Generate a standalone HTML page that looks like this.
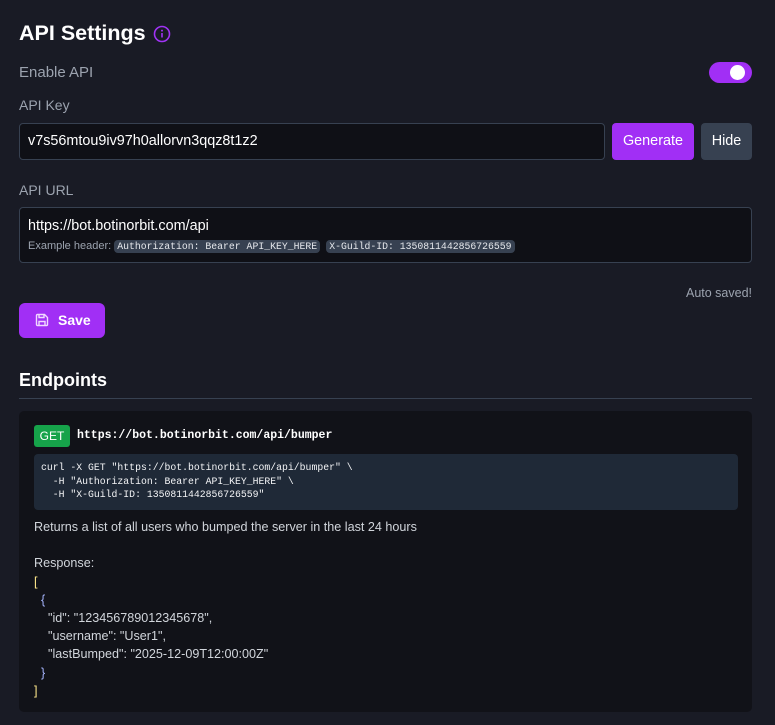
<!DOCTYPE html>
<html><head><meta charset="utf-8"><style>
*{box-sizing:border-box;margin:0;padding:0}
body{width:775px;height:725px;background:#191b25;font-family:"Liberation Sans",sans-serif;color:#fff;position:relative;overflow:hidden}
.a{position:absolute}
.mono{font-family:"Liberation Mono","DejaVu Sans Mono",monospace}
.lbl{color:#9ca3af;font-size:14px}
.chip{background:#374151;border-radius:4px;padding:1px 3px;color:#e5e7eb;font-size:9.8px}
</style></head><body>
<div class="a" style="left:19px;top:21px;font-size:21.5px;font-weight:bold">API Settings</div>
<svg class="a" style="left:153px;top:25px" width="18" height="18" viewBox="0 0 18 18"><circle cx="9" cy="9" r="7.5" fill="none" stroke="#a033f5" stroke-width="1.6"/><line x1="9" y1="8" x2="9" y2="12.5" stroke="#a033f5" stroke-width="1.6"/><circle cx="9" cy="5.6" r="1" fill="#a033f5"/></svg>
<div class="a lbl" style="left:19px;top:64px;font-size:15px">Enable API</div>
<div class="a" style="left:709px;top:62px;width:43px;height:21px;border-radius:11px;background:#a12ff5"></div>
<div class="a" style="left:730px;top:65px;width:15px;height:15px;border-radius:50%;background:#fff"></div>
<div class="a lbl" style="left:19px;top:97px">API Key</div>
<div class="a" style="left:19px;top:123px;width:586px;height:37px;background:#0f1016;border:1px solid #374151;border-radius:4px;padding:0 8px;line-height:35px;font-size:14.4px">v7s56mtou9iv97h0allorvn3qqz8t1z2</div>
<div class="a" style="left:612px;top:123px;width:82px;height:37px;background:#a12ff5;border-radius:4px;text-align:center;line-height:37px;font-size:14.4px">Generate</div>
<div class="a" style="left:701px;top:123px;width:51px;height:37px;background:#374151;border-radius:4px;text-align:center;line-height:37px;font-size:14.4px">Hide</div>
<div class="a lbl" style="left:19px;top:182px">API URL</div>
<div class="a" style="left:19px;top:207px;width:733px;height:56px;background:#0f1016;border:1px solid #374151;border-radius:4px"></div>
<div class="a" style="left:28px;top:218px;font-size:14.4px">https://bot.botinorbit.com/api</div>
<div class="a" style="left:28px;top:240px;font-size:11px;color:#9ca3af;white-space:nowrap">Example header: <span class="mono chip">Authorization: Bearer API_KEY_HERE</span>&nbsp; <span class="mono chip">X-Guild-ID: 1350811442856726559</span></div>
<div class="a" style="right:23px;top:286px;font-size:12.5px;color:#9ca3af">Auto saved!</div>
<div class="a" style="left:19px;top:303px;width:86px;height:35px;background:#a12ff5;border-radius:6px;font-size:14px;font-weight:bold;line-height:35px;padding-left:39px">Save</div>
<svg class="a" style="left:34px;top:312px" width="16" height="16" viewBox="0 0 16 16" fill="none" stroke="#f0d8ff" stroke-width="1.4"><path d="M2.5 3.5a1 1 0 0 1 1-1h7l3 3v7a1 1 0 0 1-1 1h-9a1 1 0 0 1-1-1z"/><path d="M5 2.5v3h5v-3M5 13.5v-4h6v4"/></svg>
<div class="a" style="left:19px;top:370px;font-size:18px;font-weight:bold">Endpoints</div>
<div class="a" style="left:19px;top:398px;width:733px;height:1px;background:#374151"></div>
<div class="a" style="left:19px;top:411px;width:733px;height:301px;background:#111218;border-radius:5px"></div>
<div class="a" style="left:34px;top:425px;width:36px;height:22px;background:#16a34a;border-radius:3px;font-size:12px;text-align:center;line-height:22px">GET</div>
<div class="a mono" style="left:77px;top:429px;font-size:11.5px;font-weight:bold">https://bot.botinorbit.com/api/bumper</div>
<div class="a" style="left:34px;top:454px;width:704px;height:56px;background:#1f2937;border-radius:4px"></div>
<pre class="a mono" style="left:41px;top:461px;font-size:9.8px;line-height:13.5px;color:#f3f4f6">curl -X GET "https://bot.botinorbit.com/api/bumper" \
  -H "Authorization: Bearer API_KEY_HERE" \
  -H "X-Guild-ID: 1350811442856726559"</pre>
<pre class="a" style="left:34px;top:518px;font-family:'Liberation Sans',sans-serif;font-size:12.6px;line-height:18.2px;color:#d1d5db">Returns a list of all users who bumped the server in the last 24 hours

Response:
<span style="color:#fde68a">[</span>
  <span style="color:#a5b4fc">{</span>
    "id": "123456789012345678",
    "username": "User1",
    "lastBumped": "2025-12-09T12:00:00Z"
  <span style="color:#a5b4fc">}</span>
<span style="color:#fde68a">]</span></pre>
</body></html>
